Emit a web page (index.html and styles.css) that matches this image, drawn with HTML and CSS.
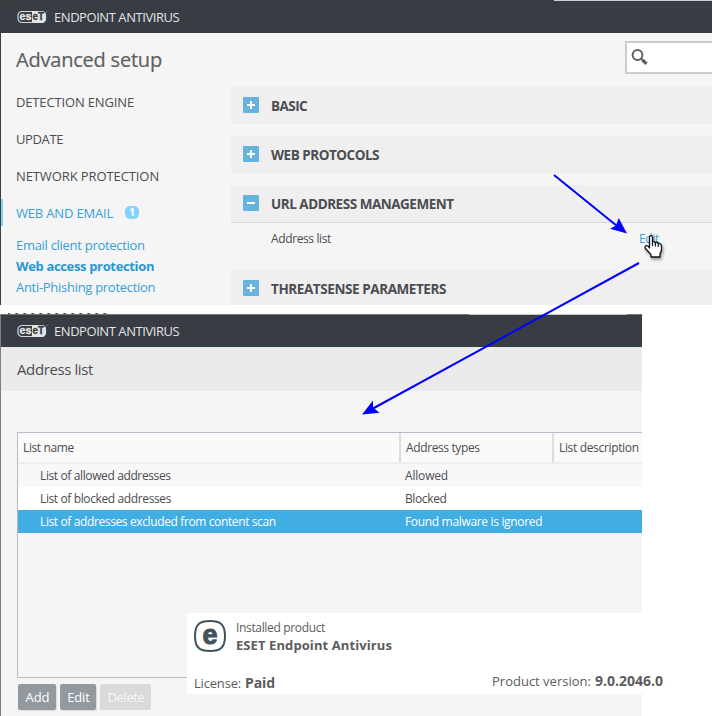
FILE: index.html
```html
<!DOCTYPE html>
<html lang="en">
<head>
<meta charset="utf-8">
<title>ESET Endpoint Antivirus</title>
<link rel="stylesheet" href="styles.css">
</head>
<body>
<svg class="defs" aria-hidden="true">
  <symbol id="brand" viewBox="0 0 31 15">
    <rect x="1" y="1.500" width="27.500" height="11" rx="4" fill="none" stroke="#d5d7d9" stroke-width="1.200"/>
    <path d="M15 1h9.500a4.500 4.500 0 0 1 4.500 4.500v3a4.500 4.500 0 0 1-4.500 4.500h-9.500z" fill="#e2e4e5"/>
    <text class="brand-l" x="2.600" y="10" textLength="12" lengthAdjust="spacingAndGlyphs">es</text>
    <text class="brand-r" x="15.600" y="10" textLength="11.500" lengthAdjust="spacingAndGlyphs">eT</text>
    <circle cx="29.800" cy="1.500" r=".6" fill="#aaaeb2"/>
  </symbol>
</svg>

<section class="window setup">
  <header class="titlebar"><svg class="brand"><use href="#brand"/></svg><span class="product">ENDPOINT ANTIVIRUS</span></header>
  <div class="columns">
    <aside class="side">
      <h1>Advanced setup</h1>
      <nav>
        <a class="item detection">DETECTION ENGINE</a>
        <a class="item update">UPDATE</a>
        <a class="item network">NETWORK PROTECTION</a>
        <a class="item active"><span>WEB AND EMAIL</span><b class="count">1</b></a>
        <div class="sub">
          <a>Email client protection</a>
          <a class="current">Web access protection</a>
          <a>Anti-Phishing protection</a>
        </div>
      </nav>
    </aside>
    <main class="panel">
      <div class="search"><svg viewBox="0 0 18 18"><circle cx="6.500" cy="6" r="4.900" fill="none" stroke="#5f5f5f" stroke-width="2"/><path d="M10 9.500l5.200 5" stroke="#5f5f5f" stroke-width="1.800"/><path d="M11.500 11l4 3.800" stroke="#5f5f5f" stroke-width="3.200"/></svg></div>
      <div class="group"><i class="toggle plus"></i><span class="basic">BASIC</span></div>
      <div class="group"><i class="toggle plus"></i><span>WEB PROTOCOLS</span></div>
      <div class="group open"><i class="toggle"></i><span>URL ADDRESS MANAGEMENT</span></div>
      <div class="setting"><span>Address list</span><a>Edit</a></div>
      <div class="group last"><i class="toggle plus"></i><span class="sense">THREATSENSE PARAMETERS</span></div>
    </main>
  </div>
</section>

<div class="gap"></div>

<section class="window list">
  <header class="titlebar"><svg class="brand"><use href="#brand"/></svg><span class="product">ENDPOINT ANTIVIRUS</span></header>
  <h2>Address list</h2>
  <div class="grid">
    <div class="row head"><span>List name</span><span>Address types</span><span>List description</span></div>
    <div class="row"><span>List of allowed addresses</span><span class="allowed">Allowed</span></div>
    <div class="row white"><span>List of blocked addresses</span><span>Blocked</span></div>
    <div class="row selected"><span>List of addresses excluded from content scan</span><span class="found">Found malware is ignored</span></div>
  </div>
  <div class="buttons"><button class="add">Add</button><button class="edit">Edit</button><button class="delete" disabled>Delete</button></div>
</section>

<section class="card">
  <div class="installed">
    <svg class="badge" viewBox="0 0 32 32"><path d="M16 1C26 1 31 4 31 16S26 31 16 31 1 28 1 16 6 1 16 1z" fill="none" stroke="#43525a" stroke-width="2"/><text x="16" y="23.500" text-anchor="middle">e</text></svg>
    <div class="name"><span>Installed product</span><strong>ESET Endpoint Antivirus</strong></div>
  </div>
  <div class="facts">
    <div class="license"><span>License:</span><strong>Paid</strong></div>
    <div class="version"><span>Product version:</span><strong>9.0.2046.0</strong></div>
  </div>
</section>

<svg class="overlay" viewBox="0 0 712 716">
  <g stroke="#00f" stroke-width="2" fill="#00f">
    <path d="M554 175L617 226M639 263L373 408.500"/>
    <path stroke="none" d="M627 233.500l-8.300-15.500-2.700 7.500-6 3.300zM362 414.500l11-14v7l6.500 5.200z"/>
  </g>
  <g class="hand" transform="translate(644 235)">
    <path d="M5.500 13V2.200Q5.500.7 7 .7T8.500 2.200V7Q10 6 11.300 7.600 13 6.700 14.200 8.400 16.700 8 17.500 10.500V14.500Q17.500 16.500 16 18.500V22H7V19.500L1.200 13.200Q.5 11.500 2.200 10.700 3.800 10.400 5.500 13z" fill="#fff" stroke="#111325" stroke-width="1.300" stroke-linejoin="round"/>
    <path d="M8.500 6v5M11.400 7.500V11.500M14.200 8.500V12" fill="none" stroke="#111325" stroke-width="1.200"/>
  </g>
</svg>
</body>
</html>
```
FILE: styles.css
```css
* { box-sizing: border-box; }
body { margin: 0; width: 712px; height: 716px; overflow: hidden; position: relative; background: #fff; font: 12px "Open Sans", "Noto Sans", sans-serif; color: #4b4d52; }
h1, h2 { margin: 0; font-weight: 400; }
.defs { display: none; }
.window { background: #f5f5f5; overflow: hidden; }
.setup { height: 305px; border-left: 1px solid #3d3d3f; }
.list { width: 642px; height: 402px; border-left: 1px solid #7f7f7f; }

.titlebar { height: 33px; padding: 1px 0 0 16px; display: flex; align-items: center; background: linear-gradient(90deg, #3d3f3e 553px, #c9cfcc 553px) 0 0 / 100% 1px no-repeat #383c43; }
.list .titlebar { background: linear-gradient(90deg, #73777a 468px, #c4c8c4 468px 626px, #73777a 626px) 0 0 / 100% 1px no-repeat #383c43; }
.brand { width: 31px; height: 15px; }
.brand-l, .brand-r { font: 700 10px "Liberation Sans", sans-serif; fill: #e2e4e5; stroke: #e2e4e5; stroke-width: .3px; }
.brand-r { fill: #383c43; stroke: #383c43; }
.product { margin-left: 6px; font-size: 13px; letter-spacing: -.44px; color: #e2e4e6; }

.columns { display: flex; }
.side { width: 230px; }
h1 { height: 50px; padding-left: 15px; line-height: 53px; font-size: 20px; letter-spacing: -.21px; color: #5e5f61; -webkit-text-stroke: .2px #5e5f61; }
.item { height: 37px; padding-left: 15px; display: flex; align-items: center; font-size: 13px; letter-spacing: -.15px; }
.update { letter-spacing: -.39px; }
.network { letter-spacing: -.1px; }
.active { color: #379fd5; background: linear-gradient(#86d1f8, #86d1f8) 0 5px / 2px 27px no-repeat; letter-spacing: -.18px; }
.count { width: 14px; height: 13px; margin-left: 12px; border-radius: 5px; background: #86d2fb; color: #fff; font-size: 10px; line-height: 13px; text-align: center; }
.sub { padding: 4px 0 0 15px; font-size: 13px; line-height: 21px; color: #379fd5; letter-spacing: -.29px; }
.sub a { display: block; }
.sub .current { font-weight: 700; color: #2898d3; letter-spacing: -.35px; }

.panel { flex: 1; padding-top: 8px; }
.search { height: 33px; margin: 0 -10px 13px 394px; padding: 6px 4px; border: 2px solid #ccc; background: #fff; }
.search svg { display: block; width: 18px; height: 18px; }
.group { height: 37px; margin-bottom: 12px; padding-left: 12px; display: flex; align-items: center; background: #efefef; font-size: 13.5px; font-weight: 700; letter-spacing: -.48px; color: #4b4d52; }
.basic { letter-spacing: -.55px; }
.sense { letter-spacing: -.42px; }
.toggle { width: 16px; height: 16px; margin: 0 12px 1px 0; border-radius: 1px; background: linear-gradient(#fff, #fff) 4px 7px / 8px 2px no-repeat #66b4dd; }
.plus { background: linear-gradient(#fff, #fff) 4px 7px / 8px 2px no-repeat, linear-gradient(#fff, #fff) 7px 4px / 2px 8px no-repeat #66b4dd; }
.open { height: 38px; margin-bottom: 0; border-bottom: 1px solid #d9d9d9; }
.setting { height: 47px; padding: 4px 0 0 40px; display: flex; line-height: 23px; letter-spacing: -.38px; }
.setting span { width: 368px; }
.setting a { color: #379fd5; }
.last { margin: 0; }

.gap { height: 9px; background: repeating-linear-gradient(90deg, #555 0 2px, #ddd 2px 4px, #fff 4px 7px, #888 7px 8px) 8px 8px / 102px 1px no-repeat; }

h2 { height: 44px; padding-left: 16px; line-height: 44px; font-size: 15px; letter-spacing: -.39px; background: #ebebeb; }
.grid { height: 246px; margin: 41px 0 0 16px; border: 1px solid #b9b9c8; border-right: 0; }
.row { height: 23px; padding-left: 22px; display: grid; grid-template-columns: 365px 1fr; line-height: 23px; background: #f8f8f8; letter-spacing: -.38px; white-space: nowrap; }
.row .allowed { letter-spacing: -.18px; }
.row .found { letter-spacing: -.33px; }
.row.white { background: #fff; }
.row.selected { background: #40aee3; color: #fff; }
.row.head { height: 31px; padding: 0; grid-template-columns: 381px 153px 1fr; background: #fafafa; border-bottom: 2px solid #eee; line-height: 30px; }
.head span { height: 29px; padding-left: 5px; }
.head span + span { border-left: 2px solid #ddd; }
.head span:last-child { letter-spacing: -.34px; }
.buttons { display: flex; gap: 4px; padding: 6px 0 0 17px; }
button { height: 26px; padding: 0; border: 0; border-radius: 2px; background: #92999f; box-shadow: 1px 1px 1px #ddd; color: #fff; font: 13px/26px "Open Sans", sans-serif; letter-spacing: -.1px; }
.add { width: 38px; }
.add, .edit { padding-left: 1px; }
.edit { width: 36px; }
.delete { width: 51px; padding-left: 1px; background: #d8dadb; color: #f8f8f8; box-shadow: none; letter-spacing: -.37px; }

.card { position: absolute; left: 187px; top: 613px; width: 525px; height: 81px; padding: 7px 0 0 7px; background: #fff; color: #5c5c5c; }
.installed { display: flex; }
.badge { width: 32px; height: 32px; overflow: visible; }
.badge text { font: 700 27px "Liberation Sans", sans-serif; fill: #43525a; stroke: #43525a; stroke-width: 1px; }
.name { margin-left: 10px; display: flex; flex-direction: column; letter-spacing: -.34px; line-height: 16px; }
.name strong { font-size: 13px; line-height: 18px; letter-spacing: .09px; }
.facts { display: flex; margin-top: 19px; font-size: 13px; line-height: 20px; }
.facts strong { font-size: 14px; margin-left: 4px; }
.license { width: 298px; letter-spacing: -.18px; }
.license strong { letter-spacing: -.1px; }
.version { margin-top: -2px; }

.overlay { position: absolute; left: 0; top: 0; width: 712px; height: 716px; pointer-events: none; }
.hand { filter: drop-shadow(1px 2px 1.5px rgba(0, 0, 0, .4)); }
```
